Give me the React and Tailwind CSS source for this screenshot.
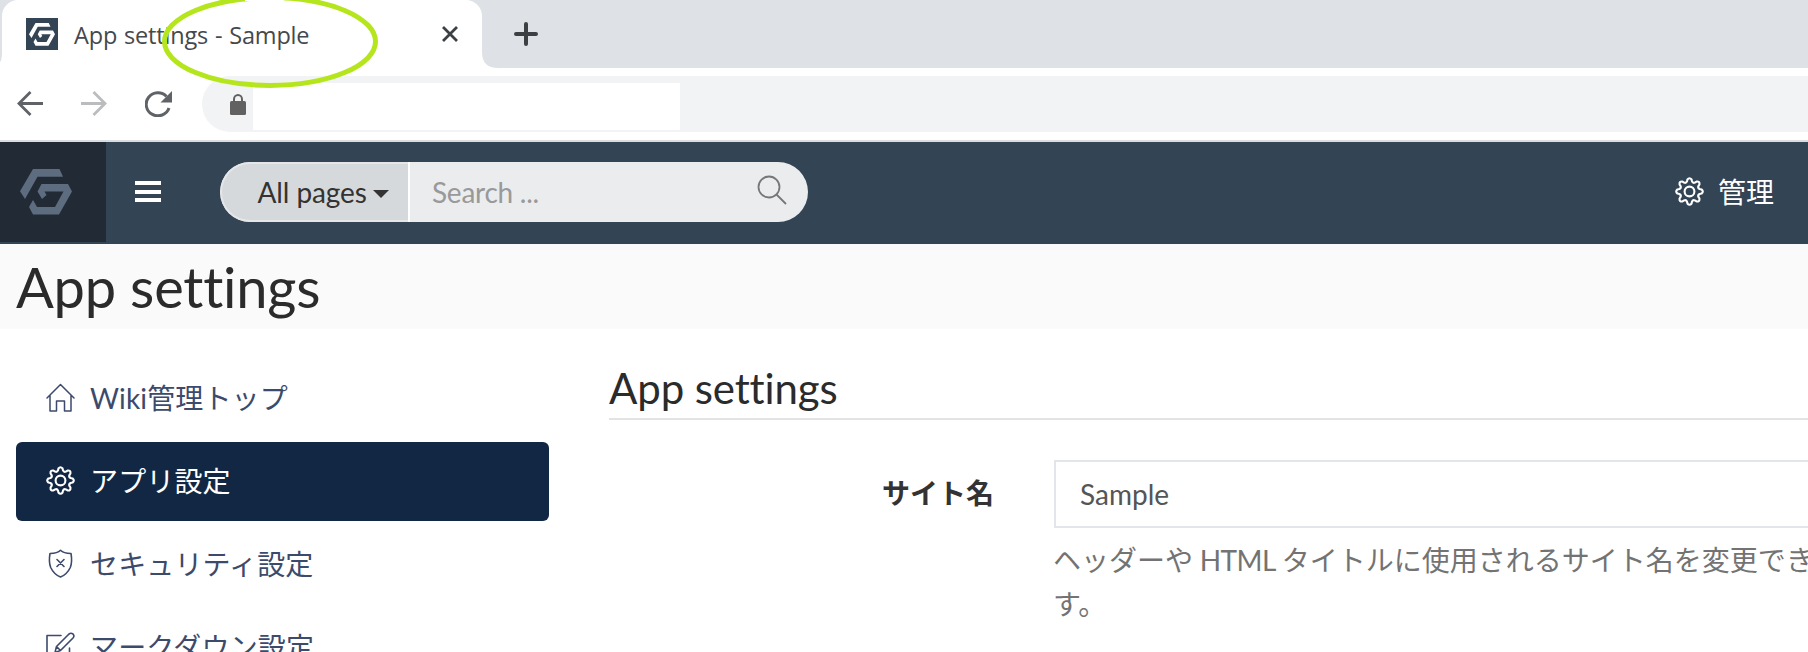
import React from "react";

function GearIcon({ className }) {
  const pts = [];
  for (let i = 0; i < 8; i++) {
    const a = (i * Math.PI) / 4;
    const p = (r, o) =>
      `${(14.5 + r * Math.sin(a + o)).toFixed(2)} ${(14.5 - r * Math.cos(a + o)).toFixed(2)}`;
    pts.push(
      `${i ? "L" : "M"}${p(10.4, -0.24)}L${p(12.2, -0.17)}Q${p(14.6, 0)} ${p(12.2, 0.17)}L${p(10.4, 0.24)}Q${p(8.8, 0.3927)} ${p(10.4, 0.5454)}`
    );
  }
  return (
    <svg className={className} viewBox="0 0 29 29" fill="none" stroke="currentColor" strokeWidth="2.1" strokeLinejoin="round">
      <path d={pts.join("") + "Z"} />
      <circle cx="14.5" cy="14.5" r="4.9" />
    </svg>
  );
}

function Logo({ className }) {
  return (
    <svg className={className} viewBox="0 0 52 46" fill="currentColor">
      <path d="M13 0H39.5L43 7.7H17.5L5 30L0 22.3Z" />
      <path d="M21.5 15H48L52 22.5L39 45.5H13L9 38L13 31L17 38H35L43.5 22.5H24.5L26.5 26L22 30L17.5 22.5Z" />
    </svg>
  );
}

function HomeIcon() {
  return (
    <svg className="size-[29px]" viewBox="0 0 29 29" fill="none" stroke="currentColor" strokeWidth="1.5" strokeLinejoin="round" strokeLinecap="round">
      <path d="M1 15L14.5 1.5L28 15M4 12.5V28H10.5V18H18.5V28H25V12.5" />
    </svg>
  );
}

function ShieldIcon() {
  return (
    <svg className="size-[29px]" viewBox="0 0 29 29" fill="none" stroke="currentColor" strokeWidth="1.6" strokeLinejoin="round" strokeLinecap="round">
      <path d="M14.5 1.3Q17.5 4.5 25 4.5Q26.5 13 24.3 18.5Q21 25.500 14.5 28Q8 25.5 4.7 18.5Q2.5 13 4 4.5Q11.5 4.5 14.5 1.3Z" />
      <path d="M11 10.5L18 17.5M18 10.5L11 17.5" />
    </svg>
  );
}

function EditIcon() {
  return (
    <svg className="size-[29px]" viewBox="0 0 29 29" fill="none" stroke="currentColor" strokeWidth="1.6" strokeLinejoin="round" strokeLinecap="round">
      <path d="M15 3.5H1V28H23.5V16" />
      <path d="M9 20.5L10.5 14.5L23 2Q25 .5 27 2Q28.8 4 27 6L14.5 18.5ZM10.5 14.5L14.5 18.5" />
    </svg>
  );
}

function TabStrip() {
  return (
    <div className="flex h-[68px] flex-none bg-[#dee1e6]">
      <svg className="h-[68px] w-[2px] flex-none" viewBox="0 0 2 68">
        <path d="M2 52Q2 60 0 62V68H2Z" fill="#fff" />
      </svg>
      <div className="flex h-[68px] w-[480px] flex-none items-start rounded-t-[16px] bg-white">
        <div className="mt-[18px] ml-6 flex h-8 w-8 flex-none items-center justify-center bg-[#334455] text-white">
          <Logo className="h-[23px] w-[26px]" />
        </div>
        <div className="mt-[17px] ml-4 w-[368px] flex-none whitespace-nowrap font-['Open_Sans',sans-serif] text-[23.5px] leading-[36px] tracking-[-0.18px] [word-spacing:1px] text-[#45484c]">
          App settings - Sample
        </div>
        <svg className="mt-[26px] size-4 flex-none" viewBox="0 0 16 16" stroke="#3c4043" strokeWidth="2.8">
          <path d="M1 1L15 15M15 1L1 15" />
        </svg>
      </div>
      <svg className="h-[68px] w-4 flex-none" viewBox="0 0 16 68">
        <path d="M0 52Q0 68 16 68H0Z" fill="#fff" />
      </svg>
      <svg className="mt-[22px] ml-4 size-6 flex-none" viewBox="0 0 24 24" stroke="#3c4043" strokeWidth="4" strokeLinecap="round">
        <path d="M2 12H22M12 2V22" />
      </svg>
    </div>
  );
}

function Toolbar() {
  return (
    <div className="flex h-[74px] flex-none border-b-2 border-[#dadce0] bg-white">
      <svg className="mt-[23px] ml-[17px] h-[25px] w-[26px] flex-none" viewBox="0 0 26 25" fill="none" stroke="#5f6368" strokeWidth="2.8">
        <path d="M26 12.5H2M13.5 1L2 12.5L13.5 24" />
      </svg>
      <svg className="mt-[23px] ml-[38px] h-[25px] w-[26px] flex-none" viewBox="0 0 26 25" fill="none" stroke="#babcbe" strokeWidth="2.8">
        <path d="M0 12.5H24M12.5 1L24 12.5L12.5 24" />
      </svg>
      <svg className="mt-[23px] ml-[38px] h-[26px] w-[27px] flex-none" viewBox="0 0 27 26" fill="none">
        <path d="M21.5 5.5A11.7 11.5 0 1 0 24 17" stroke="#5f6368" strokeWidth="3" />
        <path d="M27 0V11.5H15.5Z" fill="#5f6368" />
      </svg>
      <div className="mt-2 ml-[30px] flex h-14 flex-1 rounded-l-full bg-[#f1f3f4]">
        <svg className="mt-[18px] ml-7 h-[21px] w-4 flex-none" viewBox="0 0 16 21">
          <rect y="7" width="16" height="14" rx="1.5" fill="#616161" />
          <path d="M4 8V5.200A4 4.200 0 0 1 12 5.200V8" fill="none" stroke="#616161" strokeWidth="2" />
        </svg>
        <div className="mt-[7px] ml-[7px] h-[47px] w-[427px] bg-white" />
      </div>
    </div>
  );
}

function AppHeader() {
  return (
    <header className="flex h-[102px] flex-none bg-[#334455] text-[28px]">
      <div className="h-[100px] w-[106px] flex-none bg-[#222b35] pt-[27px] pl-5 text-[#5d6c7e]">
        <Logo className="h-[46px] w-[52px]" />
      </div>
      <div className="mt-[39px] ml-[29px] flex h-[21px] w-[26px] flex-col justify-between">
        <div className="h-1 bg-white" />
        <div className="h-1 bg-white" />
        <div className="h-1 bg-white" />
      </div>
      <div className="mt-5 ml-[59px] flex h-[60px] w-[588px] overflow-hidden rounded-full bg-[#ebecee]">
        <div className="flex w-[188px] flex-none items-center rounded-l-full border-y-2 border-l-2 border-[#e4e6e8] bg-[#d6d9dc] pl-[35.5px] whitespace-nowrap text-[#333]">
          <span className="tracking-[-0.1px]">All pages</span>
          <svg className="mt-1 ml-[6px] h-2 w-4" viewBox="0 0 16 8">
            <path d="M0 0H16L8 8Z" fill="#333" />
          </svg>
        </div>
        <div className="w-[2px] bg-white" />
        <div className="flex flex-1 items-center pl-[22px] tracking-[-0.25px] text-[#999]">Search ...</div>
        <svg className="mt-[13px] mr-[21px] size-[30px]" viewBox="0 0 30 30" fill="none" stroke="#777" strokeWidth="1.8">
          <circle cx="12" cy="12" r="10.5" />
          <path d="M19.5 19.5L29 29" />
        </svg>
      </div>
      <div className="ml-auto flex h-[98px] items-center gap-[14px] pr-[34px] text-white">
        <GearIcon className="size-[29px]" />
        <span className="pt-px">管理</span>
      </div>
    </header>
  );
}

const menu = [
  { label: "Wiki管理トップ", icon: <HomeIcon /> },
  { label: "アプリ設定", icon: <GearIcon className="size-[29px]" />, active: true },
  { label: "セキュリティ設定", icon: <ShieldIcon /> },
  { label: "マークダウン設定", icon: <EditIcon /> },
];

function Sidebar() {
  return (
    <nav className="flex w-[549px] flex-none flex-col gap-1 pt-[30px] pl-4">
      {menu.map((m) => (
        <div
          key={m.label}
          className={`flex h-[79px] flex-none items-center gap-[15px] rounded-[6px] pb-[3px] pl-[30px] tracking-[0.15px] whitespace-nowrap ${m.active ? "bg-[#122744] text-white" : "text-[#3c4a6b]"}`}
        >
          {m.icon}
          <span className="pt-px">{m.label}</span>
        </div>
      ))}
    </nav>
  );
}

export default function App() {
  return (
    <div className="relative flex h-[652px] w-[1808px] flex-col overflow-hidden bg-white font-['Lato','Noto_Sans_CJK_JP',sans-serif] [font-variant-ligatures:none]">
      <TabStrip />
      <Toolbar />
      <AppHeader />
      <div className="h-[85px] flex-none bg-[#fafafa] pl-4 text-[56px] leading-[86px] tracking-[-0.2px] text-[#2b2b2b]">App settings</div>
      <div className="flex min-h-0 flex-1 overflow-hidden text-[28px]">
        <Sidebar />
        <main className="ml-[60px] flex-1">
          <h2 className="mt-[34px] h-[57px] border-b-2 border-[#e2e3e4] text-[42px] leading-[50px] tracking-[-0.12px] text-[#2b2b2b]">App settings</h2>
          <div className="mt-10 flex">
            <label className="w-[385px] flex-none pt-3 text-right font-bold text-[#333]">サイト名</label>
            <div className="ml-[60px] w-[800px] flex-none">
              <div className="flex h-[68px] items-center border-2 border-[#e2e6ea] pl-6 text-[#555]">Sample</div>
              <p className="mt-[10px] -ml-px leading-[44px] whitespace-nowrap text-[#737373]">
                ヘッダーや<span className="tracking-[-0.5px]"> HTML </span>タイトルに使用されるサイト名を変更できま
                <br />
                す。
              </p>
            </div>
          </div>
        </main>
      </div>
      <svg className="absolute top-0 left-[150px]" width="240" height="92" viewBox="0 0 240 92" fill="none">
        <ellipse cx="120" cy="41.5" rx="105.5" ry="43.900" stroke="#b5e61d" strokeWidth="5" />
        <path d="M95 0H134" stroke="#fff" strokeWidth="2" />
      </svg>
    </div>
  );
}
